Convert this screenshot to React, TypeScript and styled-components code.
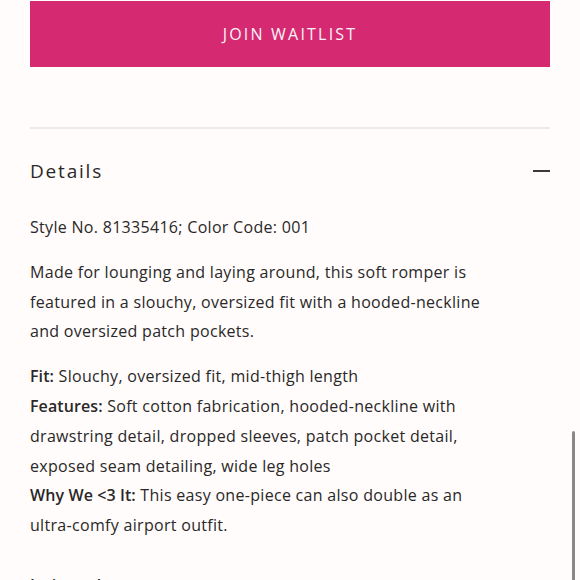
import React from "react";
import styled, { createGlobalStyle } from "styled-components";

const Global = createGlobalStyle`
  html, body { margin: 0; padding: 0; background: #fffcfb; }
  body { font-family: "Open Sans", "Liberation Sans", sans-serif; color: #2a2828; overflow: hidden; }
`;

const Page = styled.div`
  position: relative;
  height: 580px;
  overflow: hidden;
  padding: 0 30px;
`;

const WaitlistButton = styled.button`
  display: flex;
  align-items: center;
  justify-content: center;
  width: 100%;
  height: 66px;
  margin-top: 1px;
  border: none;
  background: #d52a72;
  color: #fdf3f7;
  font-family: "Open Sans", sans-serif;
  font-size: 16px;
  letter-spacing: 2.2px;
  padding: 0;
`;

const Divider = styled.hr`
  border: none;
  border-top: 2px solid #ecebea;
  margin: 60px 0 0;
`;

const AccordionHeader = styled.div`
  display: flex;
  justify-content: space-between;
  align-items: center;
  height: 84px;
`;

const Title = styled.span`
  font-size: 19px;
  letter-spacing: 1.8px;
  color: #2a2828;
`;

const Minus = styled.span`
  width: 17px;
  height: 1.5px;
  background: #3a3838;
`;

const Body = styled.div`
  max-width: 478px;
  font-size: 16px;
  line-height: 29.8px;
  letter-spacing: 0.3px;
`;

const Para = styled.p<{ $gap?: number }>`
  margin: 0 0 ${(p) => p.$gap ?? 15}px;
`;

const Label = styled.b`
  font-weight: 600;
  letter-spacing: 0.1px;
`;

const Scrollbar = styled.div`
  position: absolute;
  right: 5px;
  top: 431px;
  width: 3px;
  height: 160px;
  border-radius: 2px;
  background: #8a8888;
`;

export default function App() {
  return (
    <>
      <Global />
      <Page>
        <WaitlistButton>JOIN WAITLIST</WaitlistButton>
        <Divider />
        <AccordionHeader>
          <Title>Details</Title>
          <Minus />
        </AccordionHeader>
        <Body>
          <Para>Style No. 81335416; Color Code: 001</Para>
          <Para>
            Made for lounging and laying around, this soft romper is featured in a slouchy, oversized fit with a
            hooded-neckline and oversized patch pockets.
          </Para>
          <Para $gap={30}>
            <Label>Fit:</Label> Slouchy, oversized fit, mid-thigh length
            <br />
            <Label>Features:</Label> Soft cotton fabrication, hooded-neckline with drawstring detail, dropped
            sleeves, patch pocket detail, exposed seam detailing, wide leg holes
            <br />
            <Label>Why We &lt;3 It:</Label> This easy one-piece can also double as an ultra&#8209;comfy airport outfit.
          </Para>
          <Para>
            <Label>Intimately</Label>
          </Para>
        </Body>
        <Scrollbar />
      </Page>
    </>
  );
}
